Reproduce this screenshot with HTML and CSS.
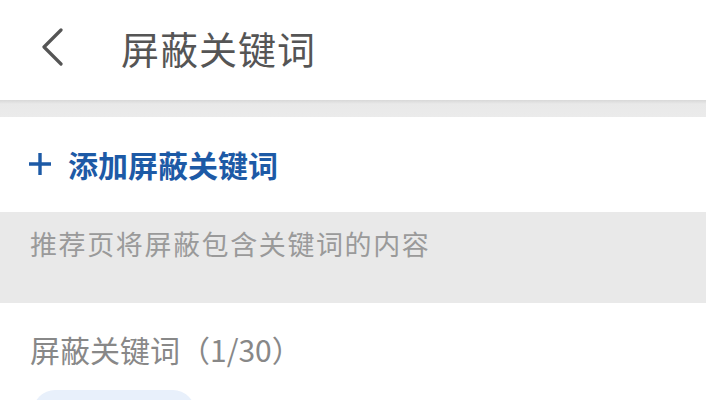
FILE: index.html
```html
<!DOCTYPE html>
<html lang="zh-CN">
<head>
    <meta charset="UTF-8">
    <meta name="viewport" content="width=device-width, initial-scale=1.0">
    <title>屏蔽关键词</title>
    <link rel="stylesheet" href="styles.css">
</head>
<body>
    <!-- Top Bar -->
    <header class="top-bar">
        <button class="back-btn" aria-label="返回">
            <svg width="24" height="38" viewBox="0 0 24 38">
                <polyline points="21,2 4,19 21,36" fill="none" stroke="#555" stroke-width="3.2" stroke-linecap="round" stroke-linejoin="round"/>
            </svg>
        </button>
        <h1 class="title">屏蔽关键词</h1>
    </header>

    <div class="gap-band"></div>

    <!-- Add Keyword -->
    <div class="add-row">
        <svg class="plus" width="24" height="24" viewBox="0 0 24 24">
            <path d="M12 1v22M1 12h22" stroke="#1d5aa6" stroke-width="3.4"/>
        </svg>
        <span>添加屏蔽关键词</span>
    </div>

    <!-- Tip -->
    <div class="tip">推荐页将屏蔽包含关键词的内容</div>

    <!-- Keyword List -->
    <section class="keywords">
        <div class="keywords-head">屏蔽关键词（1/30）</div>
        <div class="chips">
            <span class="chip"></span>
        </div>
    </section>
</body>
</html>
```

FILE: styles.css
```css
body {
    margin: 0;
    font-family: "Noto Sans CJK SC", "Noto Sans", sans-serif;
    background-color: #fff;
    height: 100vh;
    overflow: hidden;
    display: flex;
    flex-direction: column;
}

/* Top Bar */
.top-bar {
    height: 100px;
    display: flex;
    align-items: center;
    flex-shrink: 0;
}

.back-btn {
    border: none;
    background: none;
    padding: 0;
    margin-left: 40px;
    margin-top: -7px;
    width: 24px;
    height: 38px;
    display: flex;
}

.title {
    margin: 0 0 0 57px;
    margin-top: -6px;
    font-size: 38px;
    font-weight: 400;
    color: #555;
    letter-spacing: 1px;
}

.gap-band {
    height: 17px;
    flex-shrink: 0;
    background: linear-gradient(#d8d8d8, #e9e9e9 4px, #ebebeb);
}

/* Add Keyword */
.add-row {
    height: 95px;
    flex-shrink: 0;
    display: flex;
    align-items: center;
    padding-left: 28px;
    color: #1d5aa6;
    font-size: 30px;
    font-weight: 700;
    letter-spacing: 0;
}

.add-row .plus {
    margin-right: 16px;
    margin-top: -2px;
}

.add-row span {
    margin-top: -2px;
}

/* Tip */
.tip {
    height: 91px;
    flex-shrink: 0;
    box-sizing: border-box;
    background-color: #e9e9e9;
    padding: 12px 0 0 30px;
    font-size: 27px;
    color: #9a9a9a;
    letter-spacing: 1.6px;
}

/* Keyword List */
.keywords {
    padding: 26px 0 0 30px;
}

.keywords-head {
    font-size: 30px;
    color: #888;
    line-height: 40px;
}

.chips {
    margin-top: 21px;
    padding-left: 3px;
}

.chip {
    display: inline-block;
    width: 162px;
    height: 50px;
    border-radius: 22px;
    background-color: #e8f0fb;
}
```
